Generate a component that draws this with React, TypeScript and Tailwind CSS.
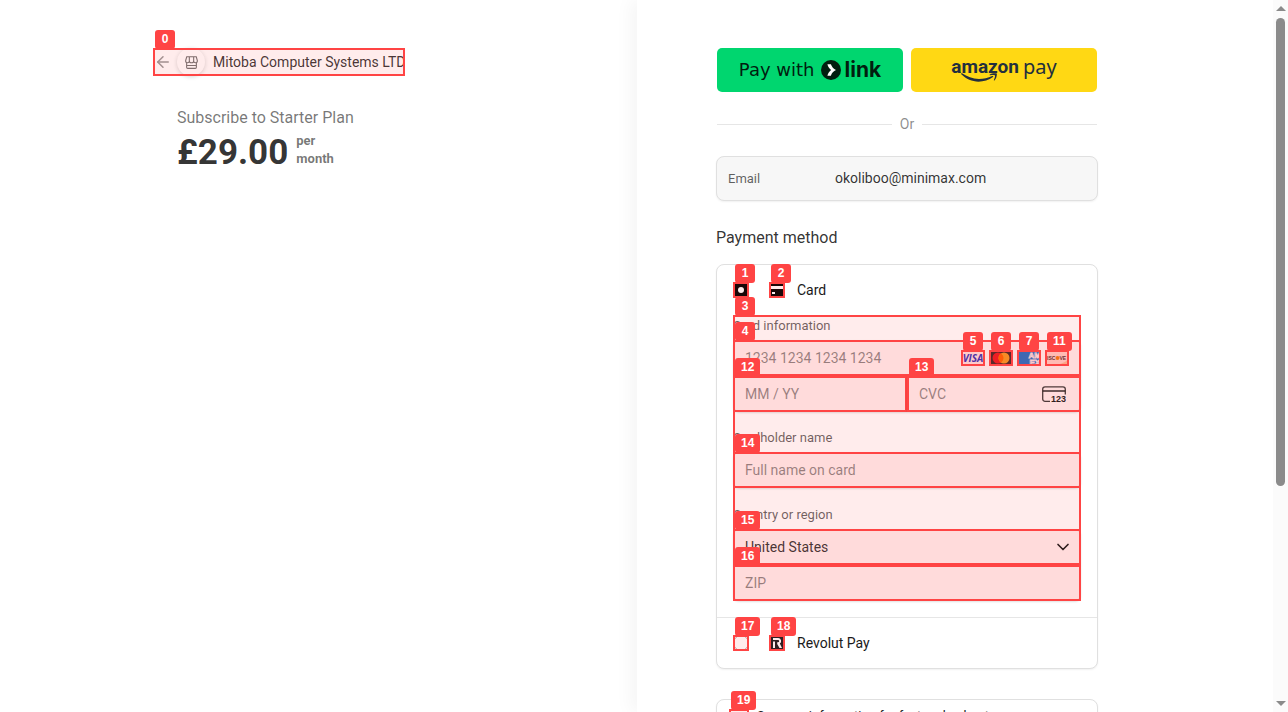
import type { ReactNode } from "react";
import { ArrowLeft, ChevronDown } from "lucide-react";

function Mark({ n }: { n: number }) {
  return (
    <span className="pointer-events-none absolute inset-0 border-2 border-[#ff4444] bg-[#ff4444]/10">
      <span className="absolute -top-5 left-0 flex h-[19px] min-w-5 items-center justify-center rounded-[3px] bg-[#ff4444] px-1.5 pb-0.5 font-['Liberation_Sans',Arial,sans-serif] text-xs leading-none font-bold text-white">
        {n}
      </span>
    </span>
  );
}

function Marked({ n, className, children }: { n: number; className: string; children?: ReactNode }) {
  return (
    <div className={`relative ${className}`}>
      {children}
      <Mark n={n} />
    </div>
  );
}

const fieldClass =
  "block h-9 w-full border border-[#e0e0e0] bg-[#ffecec] px-[11px] text-sm text-[#1a1a1a]/90 shadow-[0_1px_2px_rgba(0,0,0,0.12)] outline-none placeholder:text-[#1a1a1a]/50";
const fieldLabel = "block pb-1 text-[13px] leading-[21px] text-[#1a1a1a]/70";
const panel = "rounded-lg border border-[#e0e0e0] bg-white shadow-[0_1px_2px_rgba(0,0,0,0.06)]";

function StoreIcon() {
  return (
    <svg viewBox="0 0 12 12" className="size-[13px]" fill="none" stroke="#727272" strokeWidth="1">
      <path d="M1.6 .7h8.8l1 3.6c0 1.2-.7 1.9-1.7 1.9S8 5.500 8 4.500c0 1-.9 1.700-2 1.700s-2-.7-2-1.700c0 1-.7 1.700-1.700 1.700S.6 5.500.6 4.300zM4 4.500V.8M8 4.500V.8M1.500 6.200v4.200c0 .6.400 1 1 1h7c.6 0 1-.4 1-1V6.200M1.500 8.700h9" />
    </svg>
  );
}

function LinkButton() {
  return (
    <button type="button" aria-label="Pay with Link" className="flex h-11 flex-1 items-center justify-center rounded-[5px] bg-[#00d66f] text-[#011e0f]">
      <span className="font-['DejaVu_Sans',sans-serif] text-lg">Pay with</span>
      <svg viewBox="0 0 20 20" className="ml-1.5 size-5">
        <circle cx="10" cy="10" r="10" fill="#011e0f" />
        <path d="M6.400 4.300h3.500c.8 2.600 2.700 4.600 5.100 5.700-2.400 1.100-4.300 3.100-5.100 5.700H6.400c.6-2.300 1.900-4.300 3.700-5.700-1.800-1.400-3.100-3.400-3.700-5.700z" fill="#fff" />
      </svg>
      <span className="ml-1 font-['Inter',sans-serif] text-[21px] font-bold">link</span>
    </button>
  );
}

function AmazonButton() {
  return (
    <button type="button" aria-label="Amazon Pay" className="flex h-11 flex-1 justify-center rounded-[5px] bg-[#ffd814] pt-[9px] text-[#232f3e]">
      <span className="relative font-['Roboto',sans-serif] text-[19px] leading-[20px] font-bold">
        amazon
        <svg viewBox="0 0 36 9" className="absolute top-4 left-[10px] h-[9px] w-9" fill="#232f3e">
          <path d="M.3.3c-.4.400-.2.800.3 1.300C5 6 11 8.700 17.500 8.700c5 0 10.500-1.700 14.500-4.600.7-.6 0-1.300-.8-1C27 4.900 22.500 6 18 6 11.500 6 6.200 3.600 1 .3.700.100.500.1.300.3z" />
          <path d="M28.600 1.700c1.900-1.600 6.500-1.900 7.100-1.100.5.800-.2 4.900-2.200 6.800-.4.300-.8.100-.6-.4.500-1.200 1.500-3.900 1-4.600-.5-.6-3.400-.3-4.700-.2-.6.100-.8-.3-.6-.5z" />
        </svg>
      </span>
      <span className="ml-1 font-['Noto_Sans',sans-serif] text-xl leading-[20px]">pay</span>
    </button>
  );
}

function VisaIcon() {
  return (
    <svg viewBox="0 0 24 16" className="block h-4 w-6">
      <rect width="24" height="16" fill="#ffdada" />
      <text x="12" y="11.500" textAnchor="middle" fontFamily="Open Sans" fontStyle="italic" fontWeight="700" fontSize="10" fill="#3d2fb0">VISA</text>
    </svg>
  );
}

function MastercardIcon() {
  return (
    <svg viewBox="0 0 24 16" className="block h-4 w-6">
      <rect width="24" height="16" fill="#4a2626" />
      <circle cx="9" cy="8" r="5.500" fill="#eb1a20" />
      <circle cx="15" cy="8" r="5.500" fill="#f79422" />
      <path d="M12 3.400a5.500 5.500 0 0 1 0 9.200 5.500 5.500 0 0 1 0-9.200" fill="#ff5f00" />
    </svg>
  );
}

function AmexIcon() {
  return (
    <svg viewBox="0 0 24 16" className="block h-4 w-6">
      <rect width="24" height="16" fill="#2a6cbf" />
      <g fontFamily="Liberation Sans" fontWeight="700" fontSize="8" fill="#2a6cbf" stroke="#ffdada" strokeWidth=".8">
        <text x="11.500" y="8">AM</text>
        <text x="12.500" y="14.500">EX</text>
      </g>
    </svg>
  );
}

function DiscoverIcon() {
  return (
    <svg viewBox="0 0 24 16" className="block h-4 w-6">
      <rect width="24" height="16" fill="#ffc8c0" />
      <path d="M6 16c8-1 14-3.500 18-7v7z" fill="#f27712" opacity=".3" />
      <g fontFamily="Liberation Sans" fontWeight="700" fontSize="5" fill="#5a3030">
        <text x="2" y="10">ISC</text>
        <text x="14.500" y="10">VE</text>
      </g>
      <circle cx="12.500" cy="8" r="2" fill="#f27712" />
    </svg>
  );
}

function CvcIcon() {
  return (
    <svg viewBox="0 0 24 17" className="h-[17px] w-6">
      <path d="M8 15.300H3a2.300 2.300 0 0 1-2.300-2.300V3A2.300 2.300 0 0 1 3 .8h18A2.300 2.300 0 0 1 23.300 3v5.500" fill="none" stroke="#1a1a1a" strokeOpacity=".85" strokeWidth="1.300" />
      <path d="M.7 4h22.600v2H.7z" fill="#1a1a1a" fillOpacity=".7" />
      <text x="9" y="16" fontFamily="Liberation Sans" fontWeight="700" fontSize="9" fill="#1a1a1a">123</text>
    </svg>
  );
}

function CreditCardIcon() {
  return (
    <svg viewBox="0 0 16 16" className="block size-4">
      <path d="M0 2h16v2H0zM0 7h16v7H0z" fill="#000" />
      <path d="M3 10h3v2H3z" fill="#fff" />
    </svg>
  );
}

function RevolutIcon() {
  return (
    <svg viewBox="0 0 16 16" className="block size-4">
      <rect width="16" height="16" fill="#191c1f" />
      <path d="M4 6.500h2V13H4zM4 3h5.200a3 3 0 0 1 1.600 5.500L13 13h-2.500L8.200 9V7.300H9a1.200 1.200 0 0 0 0-2.400H4z" fill="#fff" />
    </svg>
  );
}

function ScrollRail() {
  return (
    <div aria-hidden="true" className="flex w-[15px] shrink-0 flex-col items-center bg-[#fbfbfb] py-1.5">
      <svg viewBox="0 0 10 5" className="h-[5px] w-[10px]"><path d="M5 0l5 5H0z" fill="#8b8b8b" /></svg>
      <div className="mt-[7px] flex w-[9px] flex-1 flex-col">
        <div className="h-[68.5%] rounded-full bg-[#8b8b8b]" />
      </div>
      <svg viewBox="0 0 10 5" className="h-[5px] w-[10px]"><path d="M5 5l5-5H0z" fill="#8b8b8b" /></svg>
    </div>
  );
}

const brands = [
  { n: 5, icon: <VisaIcon /> },
  { n: 6, icon: <MastercardIcon /> },
  { n: 7, icon: <AmexIcon /> },
  { n: 11, icon: <DiscoverIcon /> },
];

export default function App() {
  return (
    <div className="flex h-screen overflow-hidden bg-white font-['Roboto',sans-serif] text-[#1a1a1a]">
      <section className="flex flex-1 justify-end pt-12 pr-20">
        <div className="w-[380px]">
          <Marked n={0} className="-ml-6 h-7 w-[252px]">
            <a href="#back" className="flex h-7 items-center">
              <ArrowLeft className="ml-px size-[18px] shrink-0 text-[#999]" strokeWidth={2} />
              <span className="ml-[5px] flex size-7 shrink-0 items-center justify-center rounded-full bg-white shadow-[0_1px_4px_rgba(0,0,0,0.16)]">
                <StoreIcon />
              </span>
              <span className="ml-2 flex-1 overflow-hidden text-sm whitespace-nowrap text-[#1a1a1a]/90">Mitoba Computer Systems LTD</span>
            </a>
          </Marked>
          <h1 className="mt-[30px] text-base leading-6 text-[#1a1a1a]/60">Subscribe to Starter Plan</h1>
          <div className="flex items-start gap-2">
            <span className="text-[35px] leading-[46px] font-bold text-[#1a1a1a]/90">£29.00</span>
            <span className="pt-0.5 text-[13px] leading-[18px] font-bold text-[#1a1a1a]/60">
              per
              <br />
              month
            </span>
          </div>
        </div>
      </section>

      <main className="flex-1 bg-white pt-12 pl-[79px] shadow-[-7px_0_16px_rgba(0,0,0,0.04)]">
        <div className="w-[382px]">
          <div className="flex gap-2 px-px">
            <LinkButton />
            <AmazonButton />
          </div>

          <div className="mt-[22px] flex h-5 items-center gap-2 px-px text-sm text-[#1a1a1a]/50">
            <span className="h-px flex-1 bg-[#e6e6e6]" />
            Or
            <span className="h-px flex-1 bg-[#e6e6e6]" />
          </div>

          <dl className="mt-[22px] flex h-[45px] items-center rounded-lg border border-[#e0e0e0] bg-[#f7f7f7] px-[11px] shadow-[0_1px_2px_rgba(0,0,0,0.06)]">
            <dt className="w-[107px] text-[13px] text-[#1a1a1a]/70">Email</dt>
            <dd className="pb-0.5 text-sm text-[#1a1a1a]/90">okoliboo@minimax.com</dd>
          </dl>

          <h2 className="mt-[25px] text-base leading-6 text-[#1a1a1a]/90">Payment method</h2>

          <form className={`mt-[14px] ${panel}`}>
            <div className="flex h-[50px] items-center px-4">
              <Marked n={1} className="size-4">
                <input id="pay-card" type="radio" name="method" defaultChecked className="grid size-4 appearance-none place-items-center rounded-[4px] bg-black before:size-1.5 before:rounded-full before:bg-white" />
              </Marked>
              <Marked n={2} className="ml-5 size-4"><CreditCardIcon /></Marked>
              <label htmlFor="pay-card" className="ml-3 text-sm">Card</label>
            </div>

            <div className="relative mx-4 mb-4">
              <Mark n={3} />
              <label htmlFor="number" className={fieldLabel}>Card information</label>
              <div className="relative h-9">
                <input id="number" placeholder="1234 1234 1234 1234" className={`${fieldClass} rounded-t-md`} />
                <Mark n={4} />
                <div className="absolute top-2.5 right-3 flex gap-1">
                  {brands.map((b) => (
                    <Marked key={b.n} n={b.n} className="h-4 w-6">{b.icon}</Marked>
                  ))}
                </div>
              </div>
              <div className="flex">
                <Marked n={12} className="h-9 flex-1">
                  <input aria-label="Expiry" placeholder="MM / YY" className={`${fieldClass} rounded-bl-md`} />
                </Marked>
                <Marked n={13} className="h-9 flex-1">
                  <input aria-label="CVC" placeholder="CVC" className={`${fieldClass} rounded-br-md`} />
                  <span className="absolute top-2.5 right-[15px]"><CvcIcon /></span>
                </Marked>
              </div>

              <label htmlFor="holder" className={`mt-[15px] ${fieldLabel}`}>Cardholder name</label>
              <Marked n={14} className="h-9">
                <input id="holder" placeholder="Full name on card" className={`${fieldClass} rounded-md`} />
              </Marked>

              <label htmlFor="country" className={`mt-4 ${fieldLabel}`}>Country or region</label>
              <Marked n={15} className="h-9">
                <select id="country" className={`${fieldClass} appearance-none rounded-t-md`}>
                  <option>United States</option>
                </select>
                <ChevronDown className="absolute top-2 right-2 size-5" strokeWidth={2} />
              </Marked>
              <Marked n={16} className="h-9">
                <input aria-label="ZIP" placeholder="ZIP" className={`${fieldClass} rounded-b-md`} />
              </Marked>
            </div>

            <div className="flex h-[51px] items-center border-t border-[#e6e6e6] px-4">
              <Marked n={17} className="size-4">
                <input id="pay-revolut" type="radio" name="method" className="block size-4 appearance-none rounded-full border border-[#b0b0b0] bg-white" />
              </Marked>
              <Marked n={18} className="ml-5 size-4"><RevolutIcon /></Marked>
              <label htmlFor="pay-revolut" className="ml-3 text-sm">Revolut Pay</label>
            </div>
          </form>

          <div className={`mt-[30px] flex px-3 pt-[9px] pb-4 ${panel}`}>
            <Marked n={19} className="size-5 shrink-0">
              <input id="save" type="checkbox" className="block size-5 appearance-none rounded border border-[#999] bg-white" />
            </Marked>
            <label htmlFor="save" className="ml-2 text-[13px] leading-[14px]">Save my information for faster checkout</label>
          </div>
        </div>
      </main>
      <ScrollRail />
    </div>
  );
}
